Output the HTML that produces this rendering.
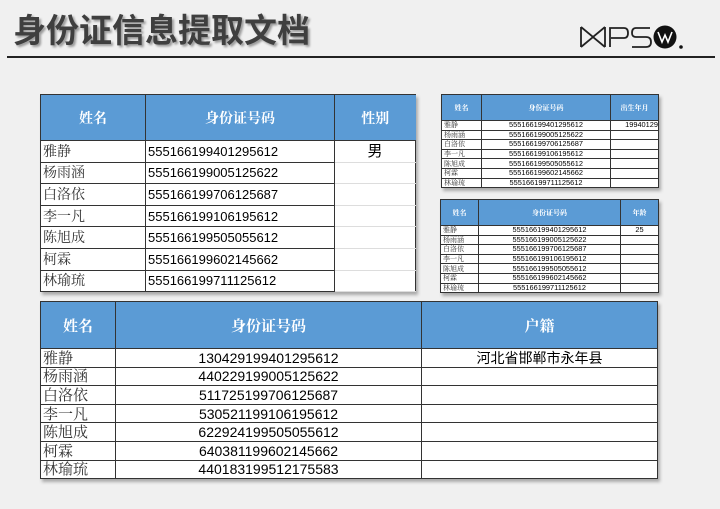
<!DOCTYPE html>
<html><head><meta charset="utf-8"><style>
*{margin:0;padding:0;box-sizing:border-box}
body{width:720px;height:509px;background:#f0f0f0;position:relative;overflow:hidden;font-family:"Liberation Sans","Noto Sans CJK SC",sans-serif}
.title{position:absolute;left:13px;top:7px;font-size:33px;font-weight:bold;color:#3f3f3f;text-shadow:2px 2px 2px #9a9a9a;font-family:"Noto Sans CJK SC",sans-serif;line-height:42px}
.hr{position:absolute;left:7px;top:56px;width:708px;height:1.5px;background:#222}
table{position:absolute;border-collapse:collapse;background:#fff;box-shadow:2px 3px 3px #aaa;table-layout:fixed}
td,th{border:1px solid #333;overflow:hidden;white-space:nowrap;padding:0}
th{background:#5b9bd5;color:#fff;font-family:"Noto Serif CJK SC",serif;font-weight:bold}
td.n{font-family:"Noto Serif CJK SC",serif;color:#333;text-align:left;padding-left:2px}
td.e{border-top:1px solid #ddd;border-bottom:1px solid #ddd}
.c{text-align:center}
.s td{height:9.6px;line-height:8px;font-size:7.4px}
.s td.n{font-size:7px}
.m td{height:21.6px;line-height:19px;font-size:13px}
.m td.n{font-size:14px}
.b td{height:18.6px;line-height:16px;font-size:14px}
.b td.n{font-size:15px}
</style></head><body>
<div class="title">身份证信息提取文档</div>
<div class="hr"></div>
<svg style="position:absolute;left:578px;top:24px" width="120" height="28" viewBox="0 0 120 28">
<g fill="none" stroke="#222" stroke-width="1.8">
<path d="M3 3 V23 M27 3 V23 M3 3 L15 13 L27 3 M3 23 L15 13 L27 23"/>
<path d="M32 23 V4 H46 Q50 4 50 9 Q50 14 46 14 H33"/>
<path d="M72 4 H58 Q54 4 54 9 Q54 13 58 13 H68 Q73 13 73 18 Q73 23 68 23 H54"/>
</g>
<circle cx="87" cy="13" r="11.5" fill="#111"/>
<path d="M80 8 L84 18 L87 11 L90 18 L94 8" fill="none" stroke="#fff" stroke-width="1.6"/>
<circle cx="103" cy="23" r="1.8" fill="#111"/>
</svg>

<table class="m" style="left:40px;top:94px;width:375px">
<colgroup><col style="width:105px"><col style="width:189px"><col style="width:81px"></colgroup>
<tr style="height:46px"><th style="font-size:14px">姓名</th><th style="font-size:14px">身份证号码</th><th style="font-size:14px;border-right:none">性别</th></tr>
<tr><td class="n">雅静</td><td style="padding-left:2px">555166199401295612</td><td class="c e" style="font-size:15px">男</td></tr>
<tr><td class="n">杨雨涵</td><td style="padding-left:2px">555166199005125622</td><td class="e"></td></tr>
<tr><td class="n">白洛依</td><td style="padding-left:2px">555166199706125687</td><td class="e"></td></tr>
<tr><td class="n">李一凡</td><td style="padding-left:2px">555166199106195612</td><td class="e"></td></tr>
<tr><td class="n">陈旭成</td><td style="padding-left:2px">555166199505055612</td><td class="e"></td></tr>
<tr><td class="n">柯霖</td><td style="padding-left:2px">555166199602145662</td><td class="e"></td></tr>
<tr><td class="n">林瑜琉</td><td style="padding-left:2px">555166199711125612</td><td class="e"></td></tr>
</table>

<table class="s" style="left:441px;top:94px;width:217px;font-size:7px">
<colgroup><col style="width:40px"><col style="width:129px"><col style="width:48px"></colgroup>
<tr style="height:26px"><th>姓名</th><th>身份证号码</th><th>出生年月</th></tr>
<tr><td class="n">雅静</td><td class="c">555166199401295612</td><td style="text-align:right">19940129</td></tr>
<tr><td class="n">杨雨涵</td><td class="c">555166199005125622</td><td></td></tr>
<tr><td class="n">白洛依</td><td class="c">555166199706125687</td><td></td></tr>
<tr><td class="n">李一凡</td><td class="c">555166199106195612</td><td></td></tr>
<tr><td class="n">陈旭成</td><td class="c">555166199505055612</td><td></td></tr>
<tr><td class="n">柯霖</td><td class="c">555166199602145662</td><td></td></tr>
<tr><td class="n">林瑜琉</td><td class="c">555166199711125612</td><td></td></tr>
</table>

<table class="s" style="left:440px;top:199px;width:218px;font-size:7px">
<colgroup><col style="width:38px"><col style="width:142px"><col style="width:38px"></colgroup>
<tr style="height:26px"><th>姓名</th><th>身份证号码</th><th>年龄</th></tr>
<tr><td class="n">雅静</td><td class="c">555166199401295612</td><td class="c">25</td></tr>
<tr><td class="n">杨雨涵</td><td class="c">555166199005125622</td><td></td></tr>
<tr><td class="n">白洛依</td><td class="c">555166199706125687</td><td></td></tr>
<tr><td class="n">李一凡</td><td class="c">555166199106195612</td><td></td></tr>
<tr><td class="n">陈旭成</td><td class="c">555166199505055612</td><td></td></tr>
<tr><td class="n">柯霖</td><td class="c">555166199602145662</td><td></td></tr>
<tr><td class="n">林瑜琉</td><td class="c">555166199711125612</td><td></td></tr>
</table>

<table class="b" style="left:40px;top:301px;width:617px">
<colgroup><col style="width:75px"><col style="width:306px"><col style="width:236px"></colgroup>
<tr style="height:47px"><th style="font-size:15px">姓名</th><th style="font-size:15px">身份证号码</th><th style="font-size:15px">户籍</th></tr>
<tr><td class="n">雅静</td><td class="c">130429199401295612</td><td class="c">河北省邯郸市永年县</td></tr>
<tr><td class="n">杨雨涵</td><td class="c">440229199005125622</td><td></td></tr>
<tr><td class="n">白洛依</td><td class="c">511725199706125687</td><td></td></tr>
<tr><td class="n">李一凡</td><td class="c">530521199106195612</td><td></td></tr>
<tr><td class="n">陈旭成</td><td class="c">622924199505055612</td><td></td></tr>
<tr><td class="n">柯霖</td><td class="c">640381199602145662</td><td></td></tr>
<tr><td class="n">林瑜琉</td><td class="c">440183199512175583</td><td></td></tr>
</table>
</body></html>
